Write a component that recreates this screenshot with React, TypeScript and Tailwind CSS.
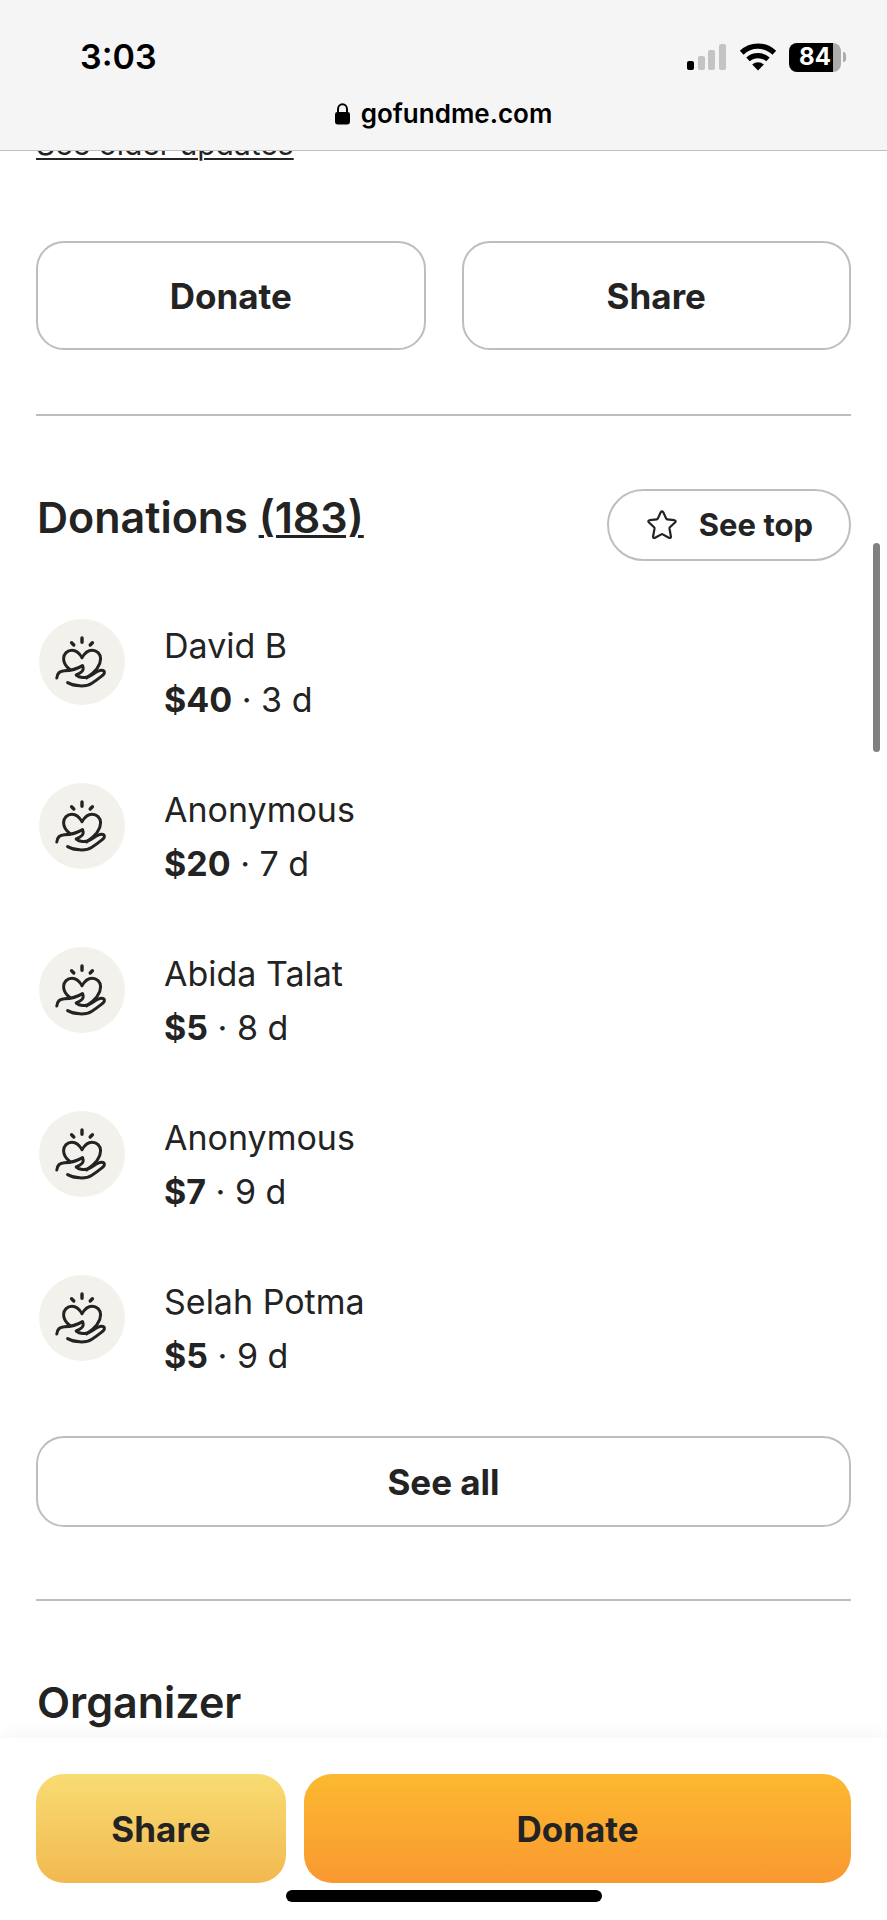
import React from "react";

type Donation = { name: string; amount: string; age: string };

const donations: Donation[] = [
  { name: "David B", amount: "$40", age: "3 d" },
  { name: "Anonymous", amount: "$20", age: "7 d" },
  { name: "Abida Talat", amount: "$5", age: "8 d" },
  { name: "Anonymous", amount: "$7", age: "9 d" },
  { name: "Selah Potma", amount: "$5", age: "9 d" },
];

function SignalIcon() {
  return (
    <svg width="40" height="28" viewBox="0 0 40 28" aria-hidden="true">
      <rect x="0" y="18" width="7" height="9" rx="2" fill="#000" />
      <rect x="11" y="13" width="7" height="14" rx="2" fill="#c4c4c4" />
      <rect x="21" y="7" width="7" height="20" rx="2" fill="#c4c4c4" />
      <rect x="32" y="1" width="7" height="26" rx="2" fill="#c4c4c4" />
    </svg>
  );
}

function WifiIcon() {
  return (
    <svg width="38" height="28" viewBox="0 0 38 28" aria-hidden="true" fill="none" stroke="#000">
      <path d="M2.7 9.7 A23.5 23.5 0 0 1 35.3 9.7" strokeWidth="5.4" />
      <path d="M9 16.4 A15 15 0 0 1 29 16.4" strokeWidth="5.2" />
      <path d="M19 27.4 L13.2 21.6 A8.6 8.6 0 0 1 24.8 21.6 Z" fill="#000" stroke="none" />
    </svg>
  );
}

function Battery() {
  return (
    <div className="flex items-center gap-0.5" aria-label="Battery 84 percent">
      <div className="flex h-[29px] w-13 items-center justify-center overflow-hidden rounded-lg bg-linear-to-r from-black from-84% to-[#acacac] to-84% text-2xl leading-none font-bold text-white">
        84
      </div>
      <div className="h-2.5 w-[3px] rounded-r-full bg-[#acacac]" />
    </div>
  );
}

function LockIcon() {
  return (
    <svg width="15" height="22" viewBox="0 0 15 22" aria-hidden="true">
      <path d="M3 11 V6.2 A4.5 5 0 0 1 12 6.2 V11" fill="none" stroke="#000" strokeWidth="2" />
      <rect x="0" y="9" width="15" height="12.5" rx="2.4" fill="#000" />
    </svg>
  );
}

function StarIcon() {
  return (
    <svg width="30" height="30" viewBox="0 0 30 30" aria-hidden="true" fill="none" stroke="#232323" strokeWidth="2.2" strokeLinejoin="round">
      <path d="M13.7 2.3 Q15 0.4 16.3 2.3 L19.2 8.6 Q19.5 9.2 20.2 9.3 L27.3 10.2 Q29.6 10.7 28 12.5 L22.9 17.3 Q22.4 17.8 22.5 18.5 L23.9 26.5 Q24 28.6 21.9 27.8 L15.7 24.4 Q15 24 14.3 24.4 L8.1 27.8 Q6 28.6 6.1 26.5 L7.5 18.5 Q7.6 17.8 7.1 17.3 L2 12.5 Q0.4 10.7 2.7 10.2 L9.8 9.3 Q10.5 9.2 10.8 8.6 Z" />
    </svg>
  );
}

function HeartHandIcon() {
  return (
    <svg
      width="86"
      height="86"
      viewBox="0 0 86 86"
      aria-hidden="true"
      className="shrink-0 rounded-full bg-[#f2f1ec]"
      fill="none"
      stroke="#232323"
      strokeWidth="3"
      strokeLinecap="round"
      strokeLinejoin="round"
    >
      <path d="M43 19 V23.3 M32.6 23.8 L34.8 26 M53.4 23.8 L51.2 26" strokeWidth="3.4" />
      <path d="M30.8 50.5 C27 47.5 24.6 43.5 24.6 39.8 C24.6 34.8 28.3 31.3 33 31.3 C38 31.3 40.5 34.3 43 38.8 C45.5 34.3 48 31.3 53 31.3 C57.8 31.3 61.6 34.8 61.6 39.8 C61.6 46.8 55 54 47.5 59" />
      <path d="M17.8 59 C18.2 54 21.5 52 25.5 51.8 C33 51.6 37.5 50.3 43.5 46.6 C45.8 51.5 42 54 37.2 56 C40.5 58.8 46 59.5 50.5 57.2 C55.5 54.5 58.5 51.5 62.5 51.3 C65.8 51.2 66.3 54 64 56 C60.5 58.8 57.5 61.3 52.5 64.5 C46.5 68.3 35 67.3 28.6 63.6" />
      <path d="M44 59 C50 58 54 53.5 57.5 51.8 L51 57 Z" fill="#232323" strokeWidth="1.5" />
    </svg>
  );
}

function OutlineButton({ children }: { children: React.ReactNode }) {
  return (
    <button
      type="button"
      className="flex-1 rounded-[28px] border-2 border-[#c1beb9] pt-[33px] pb-8 text-[35px] leading-10 font-bold"
    >
      {children}
    </button>
  );
}

function DonationRow({ name, amount, age }: Donation) {
  return (
    <li className="flex items-start gap-[39px]">
      <HeartHandIcon />
      <div className="text-[34px] leading-[54px]">
        <p>{name}</p>
        <p>
          <strong className="font-bold">{amount}</strong> · {age}
        </p>
      </div>
    </li>
  );
}

export default function App() {
  return (
    <div className="flex h-screen flex-col overflow-hidden bg-white font-['Inter',sans-serif] text-[#232323]">
      <header className="shrink-0 border-b border-[#bfbfbf] bg-[#f5f5f5] text-black">
        <div className="flex items-center justify-between pt-9 pr-[41px] pl-20">
          <time className="text-[34px] leading-[42px] font-semibold">3:03</time>
          <div className="flex items-center gap-3">
            <SignalIcon />
            <WifiIcon />
            <Battery />
          </div>
        </div>
        <div className="flex items-center justify-center gap-[11px] pt-5 pb-5">
          <LockIcon />
          <span className="text-[26px] leading-8 font-semibold">gofundme.com</span>
        </div>
      </header>

      <main className="relative min-h-0 flex-1 overflow-hidden px-9">
        <a href="#updates" className="-mt-[27px] block text-[30px] leading-10 underline decoration-2 underline-offset-3">
          See older updates
        </a>

        <div className="mt-[77px] flex gap-9">
          <OutlineButton>Donate</OutlineButton>
          <OutlineButton>Share</OutlineButton>
        </div>

        <hr className="mt-16 border-t-2 border-[#c1beb9]" />

        <section>
          <div className="mt-[73px] flex items-start justify-between">
            <h2 className="pl-px text-[43px] leading-14 font-semibold">
              Donations{" "}
              <a href="#donations" className="underline decoration-3 underline-offset-2">
                (183)
              </a>
            </h2>
            <button
              type="button"
              className="flex items-center gap-[22px] rounded-full border-2 border-[#c1beb9] py-3.5 pr-9 pl-[38px] text-[31px] leading-10 font-bold"
            >
              <StarIcon />
              See top
            </button>
          </div>
          <ul className="mt-[58px] flex flex-col gap-14 pl-[3px]">
            {donations.map((donation, i) => (
              <DonationRow key={i} {...donation} />
            ))}
          </ul>
          <div className="mt-[53px] flex">
            <button
              type="button"
              className="flex-1 rounded-[28px] border-2 border-[#c1beb9] pt-6 pb-[23px] text-[35px] leading-10 font-bold"
            >
              See all
            </button>
          </div>
        </section>

        <hr className="mt-18 border-t-2 border-[#c1beb9]" />

        <section>
          <h2 className="mt-[73px] pl-px text-[43px] leading-14 font-semibold">Organizer</h2>
        </section>

        <div className="absolute top-98 right-[7px] h-[209px] w-[7px] rounded-full bg-[#808080]" />
      </main>

      <footer className="relative shrink-0 bg-white px-9 pt-9 pb-[18px] shadow-[0_-2px_18px_rgba(0,0,0,0.05)]">
        <div className="flex gap-[18px]">
          <button
            type="button"
            className="w-[250px] rounded-[28px] bg-linear-to-b from-[#f8dc73] to-[#f1b94f] pt-[35px] pb-[34px] text-[35px] leading-10 font-bold"
          >
            Share
          </button>
          <button
            type="button"
            className="flex-1 rounded-[28px] bg-linear-to-b from-[#fcb930] to-[#f99830] pt-[35px] pb-[34px] text-[35px] leading-10 font-bold"
          >
            Donate
          </button>
        </div>
        <div className="mx-auto mt-[7px] h-3 w-[316px] rounded-full bg-black" />
      </footer>
    </div>
  );
}
